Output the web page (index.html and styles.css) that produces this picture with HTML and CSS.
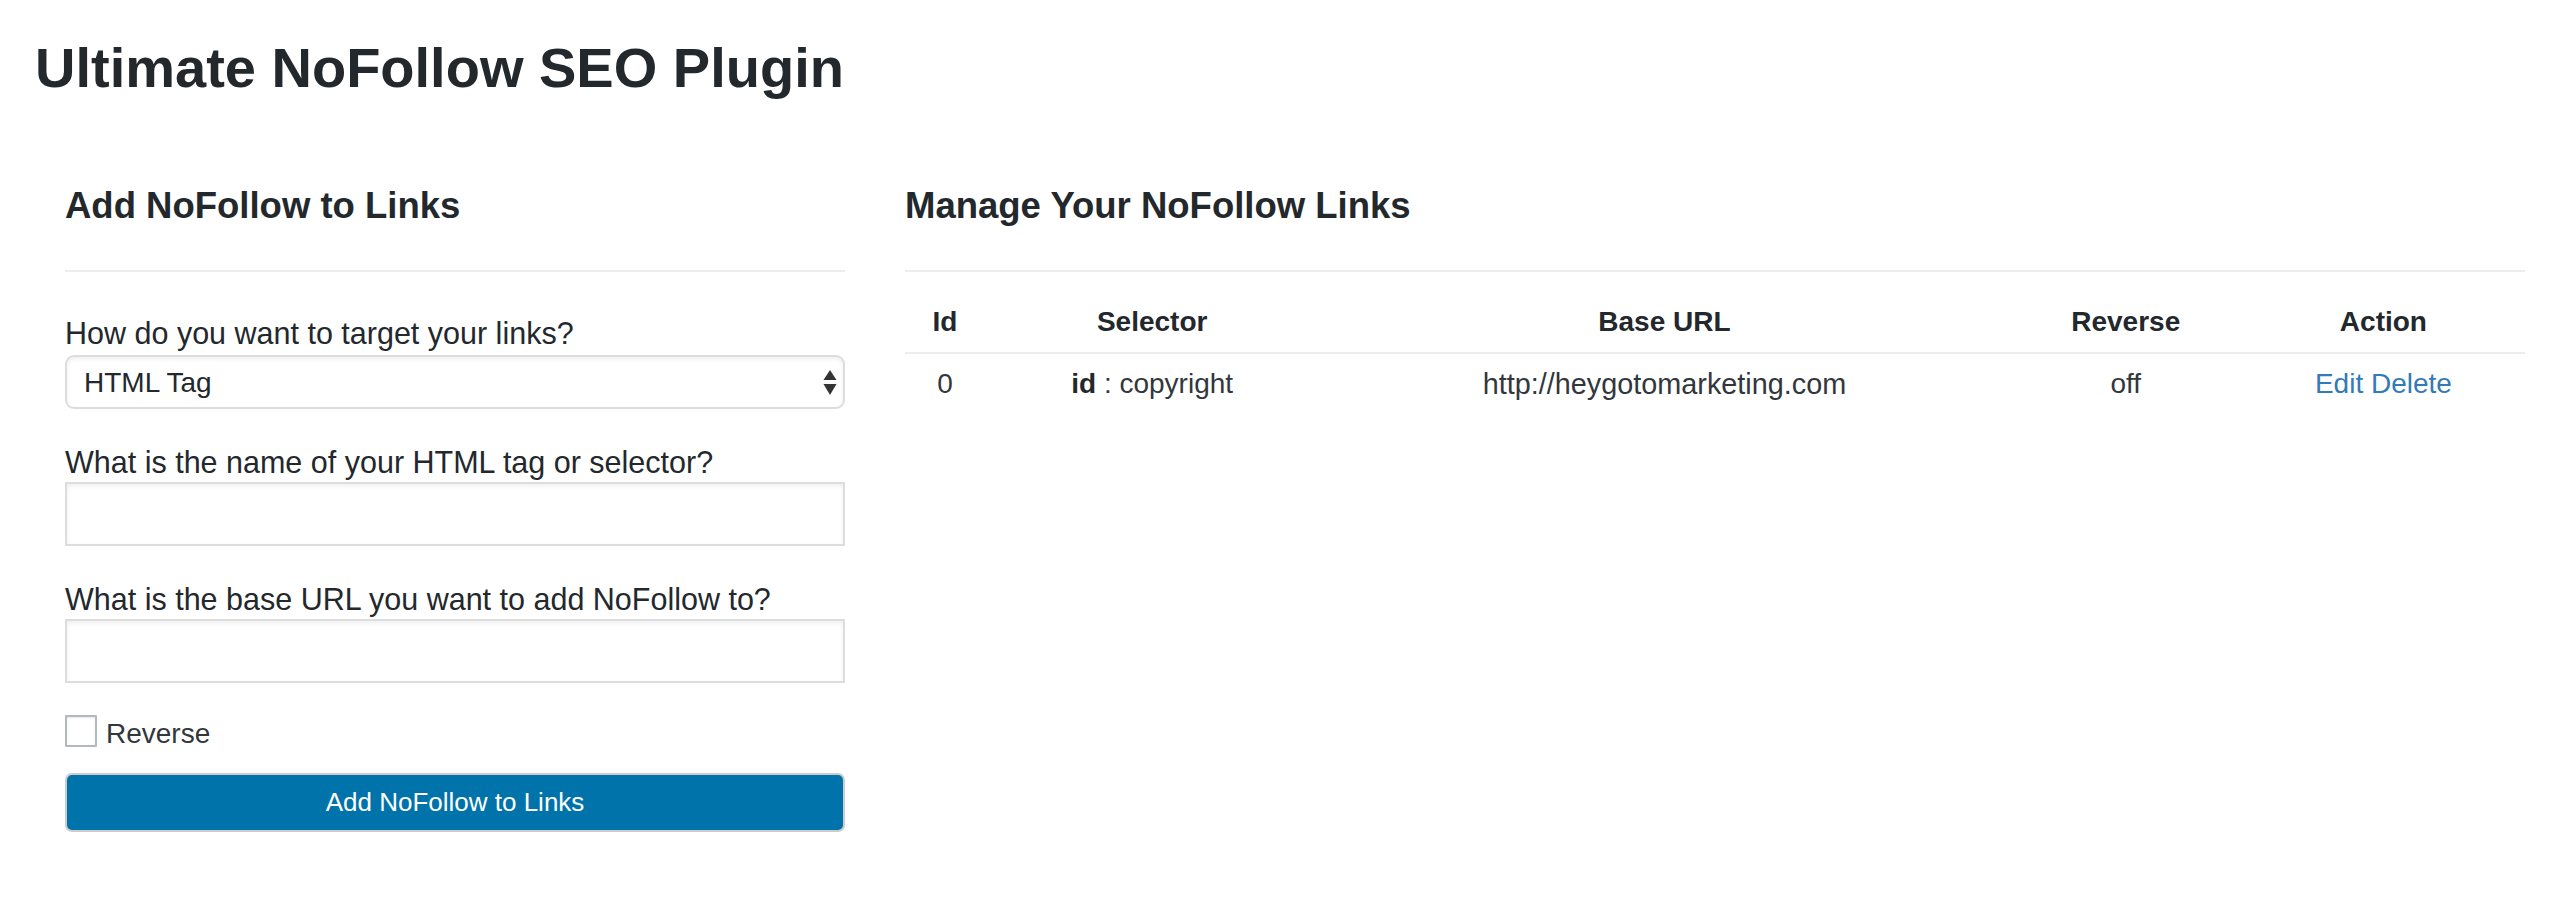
FILE: index.html
```html
<!DOCTYPE html>
<html lang="en">
<head>
<meta charset="utf-8">
<title>Ultimate NoFollow SEO Plugin</title>
<link rel="stylesheet" href="styles.css">
</head>
<body>
<div class="wrap">
  <h1 class="page-title">Ultimate NoFollow SEO Plugin</h1>
  <div class="columns">
    <section class="panel panel-form">
      <h2 class="panel-title">Add NoFollow to Links</h2>
      <hr class="divider">
      <form class="nf-form">
        <div class="field field-select">
          <label class="field-label" for="target">How do you want to target your links?</label>
          <div class="select-wrap">
            <select id="target" class="select">
              <option>HTML Tag</option>
              <option>Class</option>
              <option>Id</option>
            </select>
            <svg class="select-arrows" width="14" height="26" viewBox="0 0 14 26" aria-hidden="true">
              <path d="M7 0 L13.5 10 L0.5 10 Z" fill="#333"/>
              <path d="M0.5 14 L13.5 14 L7 25 Z" fill="#333"/>
            </svg>
          </div>
        </div>
        <div class="field field-input">
          <label class="field-label" for="selector">What is the name of your HTML tag or selector?</label>
          <input id="selector" class="text-input" type="text">
        </div>
        <div class="field field-input">
          <label class="field-label" for="baseurl">What is the base URL you want to add NoFollow to?</label>
          <input id="baseurl" class="text-input" type="text">
        </div>
        <label class="check-row">
          <input type="checkbox" class="checkbox">
          <span class="check-text">Reverse</span>
        </label>
        <button type="button" class="btn-primary">Add NoFollow to Links</button>
      </form>
    </section>
    <section class="panel panel-list">
      <h2 class="panel-title">Manage Your NoFollow Links</h2>
      <hr class="divider">
      <table class="links-table">
        <colgroup>
          <col class="c-id">
          <col class="c-sel">
          <col class="c-url">
          <col class="c-rev">
          <col class="c-act">
        </colgroup>
        <thead>
          <tr>
            <th>Id</th>
            <th>Selector</th>
            <th>Base URL</th>
            <th>Reverse</th>
            <th>Action</th>
          </tr>
        </thead>
        <tbody>
          <tr>
            <td>0</td>
            <td><strong>id</strong> : copyright</td>
            <td class="url-cell">http://heygotomarketing.com</td>
            <td>off</td>
            <td><a href="#" class="act-link">Edit</a> <a href="#" class="act-link">Delete</a></td>
          </tr>
        </tbody>
      </table>
    </section>
  </div>
</div>
</body>
</html>
```

FILE: styles.css
```css
html, body {
  margin: 0;
  padding: 0;
  background: #ffffff;
}

body {
  font-family: "Liberation Sans", Arial, Helvetica, sans-serif;
  color: #32373c;
}

.page-title {
  margin: 36px 0 0 35px;
  font-size: 56px;
  line-height: 64px;
  font-weight: 700;
  color: #23282d;
}

.columns {
  display: grid;
  grid-template-columns: 780px 1fr;
  column-gap: 60px;
  padding: 0 29px 0 65px;
  margin-top: 84px;
}

.panel-title {
  margin: 0;
  font-size: 36.5px;
  line-height: 44px;
  font-weight: 700;
  color: #23282d;
}

.divider {
  margin: 42px 0 0 0;
  border: 0;
  border-top: 2px solid #eeeeee;
  height: 0;
}

.nf-form {
  padding-top: 43px;
}

.field + .field {
  margin-top: 35px;
}

.field-label {
  display: block;
  font-size: 30.5px;
  line-height: 36px;
  color: #23282d;
}

.field-select .field-label {
  margin-bottom: 4px;
}

.field-input .field-label {
  margin-bottom: 2px;
}

.select-wrap {
  position: relative;
}

.select {
  display: block;
  width: 100%;
  height: 54px;
  margin: 0;
  padding: 0 40px 0 17px;
  -webkit-appearance: none;
  appearance: none;
  background: #ffffff;
  border: 2px solid #dddddd;
  border-radius: 9px;
  box-shadow: inset 0 2px 4px rgba(0, 0, 0, 0.07);
  font-family: "Liberation Sans", Arial, Helvetica, sans-serif;
  font-size: 28px;
  color: #23282d;
  outline: none;
}

.select-arrows {
  position: absolute;
  right: 8px;
  top: 15px;
  pointer-events: none;
}

.text-input {
  display: block;
  box-sizing: border-box;
  width: 100%;
  height: 64px;
  margin: 0;
  padding: 0 16px;
  background: #ffffff;
  border: 2px solid #dddddd;
  border-radius: 0;
  box-shadow: inset 0 2px 4px rgba(0, 0, 0, 0.07);
  font-family: "Liberation Sans", Arial, Helvetica, sans-serif;
  font-size: 28px;
  outline: none;
}

.check-row {
  display: flex;
  align-items: flex-start;
  margin-top: 32px;
  height: 32px;
}

.checkbox {
  -webkit-appearance: none;
  appearance: none;
  box-sizing: border-box;
  width: 32px;
  height: 32px;
  margin: 0;
  background: #ffffff;
  border: 2px solid #b4b9be;
  border-radius: 1px;
  box-shadow: inset 0 1px 2px rgba(0, 0, 0, 0.1);
}

.check-text {
  margin-left: 9px;
  padding-top: 3px;
  font-size: 28px;
  line-height: 32px;
  color: #32373c;
}

.btn-primary {
  display: block;
  box-sizing: border-box;
  width: 100%;
  height: 59px;
  margin-top: 26px;
  padding: 0;
  background: #0073aa;
  border: 2px solid #cccccc;
  border-radius: 7px;
  color: #ffffff;
  font-family: "Liberation Sans", Arial, Helvetica, sans-serif;
  font-size: 26px;
  line-height: 55px;
  text-align: center;
  cursor: pointer;
}

.links-table {
  width: 100%;
  margin-top: 20px;
  border-collapse: collapse;
  table-layout: fixed;
  font-size: 28px;
}

.c-id { width: 80px; }
.c-sel { width: 334px; }
.c-url { width: 690px; }
.c-rev { width: 232px; }
.c-act { width: 283px; }

.links-table th,
.links-table td {
  padding: 9px 0;
  line-height: 42px;
  text-align: center;
  white-space: nowrap;
}

.links-table th {
  font-weight: 700;
  color: #23282d;
  border-bottom: 2px solid #eeeeee;
}

.links-table td {
  color: #32373c;
}

.links-table td.url-cell {
  font-size: 28.8px;
}

.links-table td strong {
  color: #23282d;
}

.act-link {
  color: #337ab7;
  text-decoration: none;
}
```
